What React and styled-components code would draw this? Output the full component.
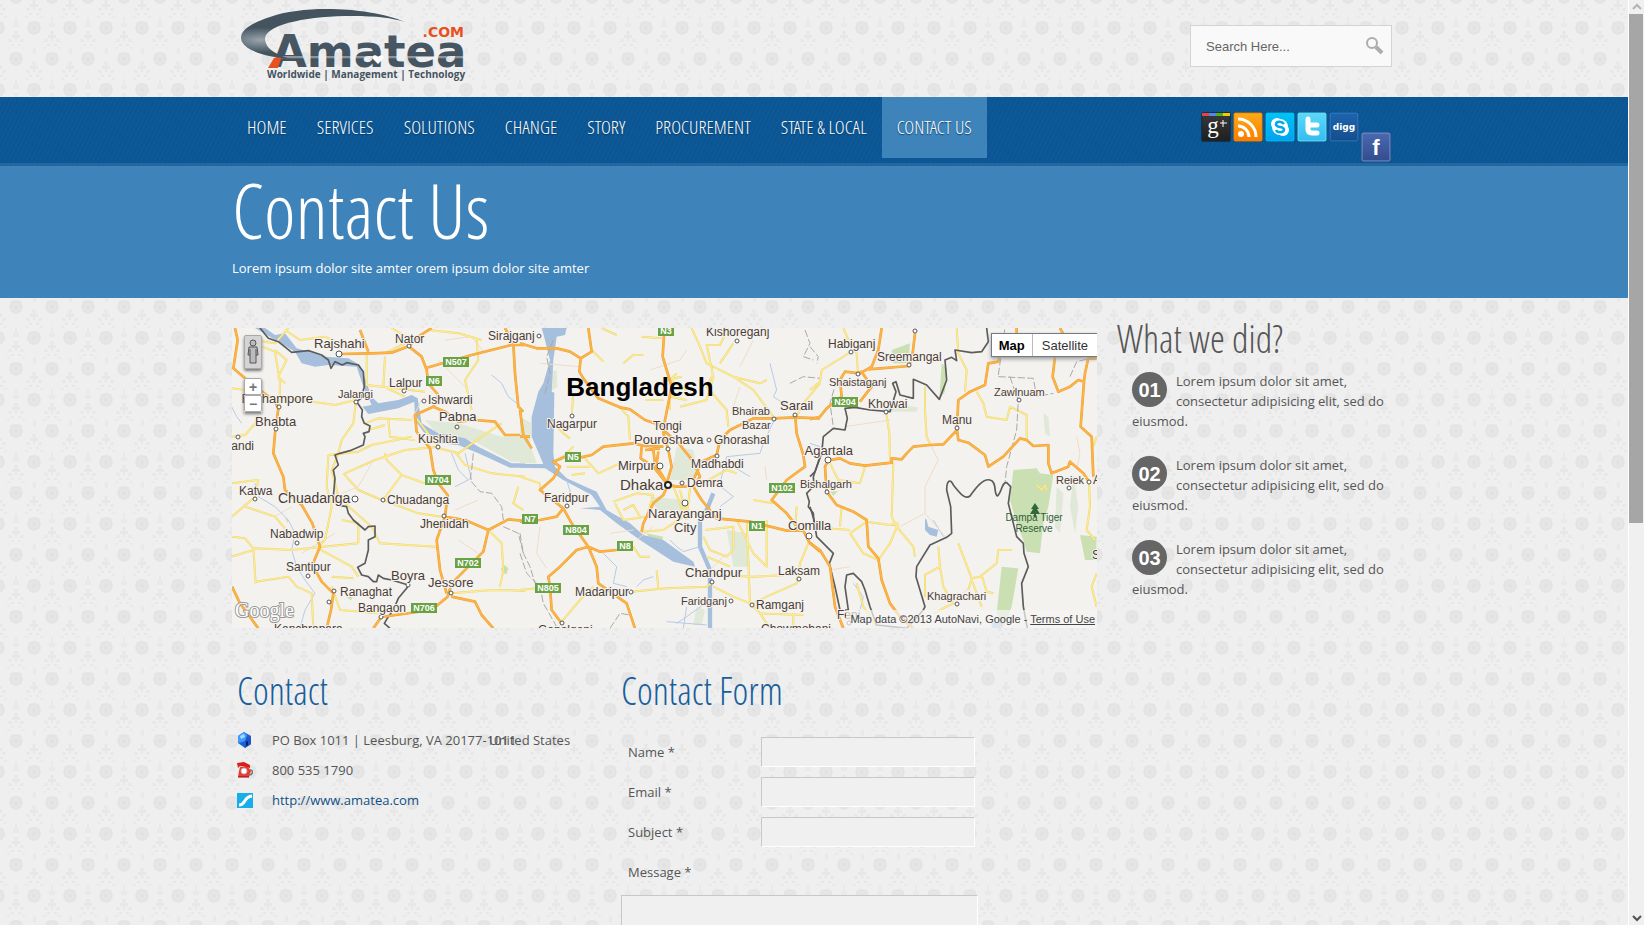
import React, {useState} from 'react';
import styled, {createGlobalStyle} from "styled-components";

const display = `"Open Sans Condensed Light", "Open Sans CondLight", "Roboto Condensed Light", "Roboto Condensed", "Liberation Sans Narrow", "Liberation Sans", sans-serif`;
const arial = `"Liberation Sans", Arial, sans-serif`;

const damask = encodeURIComponent(`<svg xmlns="http://www.w3.org/2000/svg" width="36" height="62"><defs>
<g id="h"><path d="M-5 -6L0 -7L5 -6L7 0L5 5L0 7L-5 5L-7 0Z" fill="#e4e4e4"/><path d="M0 -4L3 -2V2L0 4L-3 2V-2Z" fill="none" stroke="#e8e8e8"/><path d="M0 -1V1" stroke="#dadada"/></g>
<g id="l" fill="#e7e7e7"><path d="M-2 -8H2L1 -4H4V-1H1V2H-1V-1H-4V-4H-1Z"/><path d="M-8 0H-5L-4 3H-7ZM8 0H5L4 3H7ZM-5 5H-2V7H-5ZM5 5H2V7H5Z"/></g></defs>
<rect width="36" height="62" fill="#efefef"/>
<use href="#h" x="16" y="59"/><use href="#h" x="16" y="-3"/><use href="#h" x="34" y="28"/><use href="#h" x="-2" y="28"/>
<use href="#l" x="34" y="8"/><use href="#l" x="-2" y="8"/><use href="#l" x="16" y="39"/>
<path d="M15 17H17V23H19V27H13V23H15ZM33 48H36V54H33ZM0 48V54H-1V48ZM4 16H7V18H4ZM25 16H28V18H25ZM7 47H10V49H7ZM22 47H25V49H22Z" fill="#e9e9e9"/>
</svg>`);

const navItems = ['Home', 'Services', 'Solutions', 'Change', 'Story', 'Procurement', 'State & Local', 'Contact Us'];

const features = ['01', '02', '03'];

// Road sheets: each one is traced at 3x and shifted along the map.
const sheets = [
    {
        x: -7,
        green: ['M600 300L700 310L830 350H900V425H860L750 365L640 345Z'],
        park: ['M828 745L840 735L850 745L845 762L832 760Z', 'M180 595L192 600L188 608Z', 'M365 830L385 825L378 842Z'],
        water: 'M90 24H120L150 45L180 40L215 85L300 110L370 115L405 135L440 230L460 250L520 240L560 225L578 235L590 310L640 340L720 355L760 380L860 430H900V443H855L760 400L700 375L640 370L595 335L570 300L568 245L520 265L430 282L412 260L440 255L415 200L395 140L310 135L270 140L230 130L210 95L160 65Z',
        stream: 'M90 490L100 530L150 560L190 600L210 640L200 690L215 740L240 780L270 820L240 870L225 925M800 165L830 190L850 230L875 250M680 400L700 450L730 480L690 500M20 260L35 290L50 310M720 400L740 480',
        minor: 'M640 120L690 170L720 200M660 60L740 50L780 100M590 240L560 300M150 590L200 560M230 700L330 640M440 430L400 500L350 520M700 660L760 700M690 570L760 540',
        yellow: 'M425 105V195L600 215M180 30L225 60L300 50L380 85M80 60L150 70L190 24M110 80L150 95L165 190L163 260M150 90L185 120L160 170L180 190M21 205L60 210M163 230L330 255L392 240M392 250L385 310L350 360L340 400M310 405L400 395L440 375L560 350M420 310L460 295L560 300M490 300L495 350L570 360M480 315L430 330M340 400L320 450L345 550M570 290L640 380L540 390L450 420L360 460M480 400L485 420L530 465L600 490M530 465L474 540L580 580L650 590M355 460L400 510L470 540M360 550L440 620L465 670L545 675L635 680M310 405L305 500L320 560L300 660L280 680M21 650L60 655L85 685L200 690L280 682L400 670M85 685L92 790M21 710L85 690M92 785L190 770L215 800L260 820L265 925M280 685L380 740L400 770M320 800L345 870L460 880M320 770L385 775M21 490L100 480L90 530L21 590M60 560L150 590L200 650M690 395L720 435L800 460L900 470M880 500L865 550L895 570M680 820L800 810L900 812M795 635L830 670L835 750L825 800M720 180L760 120L755 60M610 30L700 40L770 60M720 180L740 270M21 350L60 345L100 300M640 385L700 400L770 350L830 310M350 600L400 610L400 670M480 110L475 200L540 230M500 24L560 60L480 100',
        orange: 'M30 24L38 60L25 145L60 175L150 245L160 265L150 340L145 400L175 470L180 510L230 555L262 610L285 680L262 735L290 785L325 820L318 870L305 925M21 800L45 850L100 925M342 102L440 100L500 98L551 79L590 110L605 150L610 190L640 225L625 260L570 285L575 335L615 385L625 450L640 490L668 525L660 590L635 660L645 750L665 820M605 143L740 105L860 75H900M625 260L660 275L700 305L750 300L810 305L840 345H895M840 24L865 70L870 160L880 260L895 275M657 590L720 600L790 630L850 598L900 603M790 630L775 695L680 790L668 830L620 870L469 891L445 925M679 830L750 845L770 885L805 925M405 30L430 95M551 79L580 50L620 24',
        border: 'M105 24L130 55L160 65L200 97L250 92L290 105L310 120L318 145L330 125L352 135L365 128L400 135L415 155L418 200L408 235L395 245L412 270L410 290L418 310L435 318L432 335L415 340L420 350L415 375L375 392L345 400L330 405L340 435L325 450L330 475L325 530L335 555L365 560L370 580L385 600L420 630L430 620L450 618L450 650L430 660L430 690L420 730L398 742L410 765L430 770L445 785L455 785L460 765L475 775L500 780L550 795L545 805L520 835L505 870L490 890L478 910L495 925',
        dashed: 'M745 400L740 450L735 480L765 515L800 520L830 560L835 600M835 620L880 640L895 700',
    },
    {
        x: 288,
        green: ['M470 380L520 390L530 440L520 480L450 480Z', 'M390 530L500 540L480 580L410 570Z', 'M620 630L680 640L690 740L640 740Z', 'M0 290L35 310L30 370L50 430H0Z', 'M80 160L110 150L112 200L90 215L75 200Z', 'M530 860L555 870L545 915L520 915Z'],
        park: ['M380 640L430 650L425 665L390 660Z'],
        water: 'M65 24H140L135 45L110 50L100 120L95 215L103 218L100 400L105 440L140 475L230 515L260 570L330 610L370 645L430 660L520 725L525 740L460 725L360 660L290 610L240 570L180 565L240 560L215 525L130 480L75 445L0 443V432H70L35 350V290L55 215L70 190L90 120L75 60Z',
        river: 'M540 600V680L570 750V925M580 520L560 570L540 600',
        stream: 'M540 680L490 695L470 680L450 660M600 490L620 410L720 400L730 370L765 295M750 130L770 210L760 230L820 270M570 840L500 890L470 910M590 490L640 530L600 560M140 480L155 530M250 700L290 740L280 790L320 800M350 800L370 780L400 770M640 440L690 470M500 860L490 925M440 905L560 915',
        minor: 'M180 140L60 130M390 150L480 120L500 90M620 700L560 760M60 620L50 700L80 745M660 200L640 260M400 620L350 660M740 480L735 440M270 640L340 630M700 60L660 140',
        yellow: 'M515 24L540 80L560 130L640 170L720 190L740 180M625 24L600 75H560L580 170L560 240L480 260M600 130L640 70M580 160L560 200L620 270L625 320M640 170L700 210L760 290M215 90L250 125M310 130L340 105H370M365 50L425 55M245 24L290 45M160 220L155 290M300 262L325 290L330 360M375 240H430M470 160L450 180L500 210M440 180L485 170M365 635L430 630L490 590L500 560M280 545L350 520L400 525L380 590L310 600L285 550M310 570L340 555L360 590M120 420L160 380M140 440H210M190 410L235 460L300 430M155 465L195 460M100 310L130 340L150 355M550 650L570 690L620 710L640 690V620L555 630M650 600L700 700L740 740V600M680 600L690 850M580 765L700 770L800 765L900 755M867 665L840 730L830 790L740 830L700 850M335 815L440 805L560 800L580 785M0 810L50 805M125 905L180 840L220 800M410 750L415 805M340 680L360 710H390M690 850L720 880L850 885M750 925L720 880M820 925V880M830 560L825 630M700 540L760 550M0 470L60 490V510M460 500L500 600M480 510L500 590M510 505L500 590M900 190L850 250L830 290M530 500L620 450L650 460M580 800L640 830L690 850M560 710L630 740M450 270V230L500 240',
        orange: 'M0 70L50 85H110L150 95L182 115L215 95L205 24M182 115L178 155L190 175L235 235L300 262L330 268L375 300L440 322M432 45L428 110L440 150L455 200L435 300L430 340L445 390L455 440L440 490M183 412L215 405L250 380L340 370L375 378L430 380M365 380L362 415L400 440L440 490M400 390L405 430L435 480M375 390L420 385M415 395L410 430M444 494L430 525L400 550L370 610L365 635M444 494L470 500H520L545 540L590 595L690 605L800 632H850L867 665L900 695M430 330L480 375L520 425L540 470L520 500M520 480L545 425L590 405L600 360L630 330L700 295H762L826 292L900 295M826 292L830 340L850 405L855 440L800 480L755 540L800 580L840 632M135 410L100 425L120 440L100 475L60 510L130 565L155 610L205 680L230 740L235 790L320 850L345 925M0 605L60 600L110 590L130 565M205 680L240 695L290 690M205 680L170 690L120 740L85 770L90 800L95 870L125 910M0 270L10 345L35 385M0 350H30',
        border: 'M900 410L880 470L882 495L870 510L860 520L868 545L865 560L880 580L882 610',
        dashed: 'M855 30L870 70L850 110L880 120M810 190L850 170L900 175M0 640L10 700L30 740L45 790M100 60L80 110L90 160L75 220M0 700L20 760L60 800L70 850L110 920M270 925L300 880L330 885',
    },
    {
        x: 578,
        green: ['M210 265L270 255L325 262L320 275L240 275Z', 'M740 500L760 520L750 640L735 620ZM790 460L805 560L795 640L780 560ZM700 280L715 290L720 350L705 340Z'],
        park: ['M610 450L680 445L690 460L730 465L715 560L700 610L690 700L650 695L640 660L620 610L600 540Z', 'M575 740L625 745L605 860L580 925L560 880Z', 'M810 645L860 650L858 720L825 720Z', 'M245 90L300 70L295 130L250 130Z', 'M395 130L410 145L405 215L388 238Z', 'M60 515L85 512L70 527Z'],
        water: 'M345 595L350 600L355 620L385 630L380 650L360 645L345 630ZM545 910L580 905L575 925H545Z',
        stream: 'M0 370L30 380M130 790L160 830L150 870M370 600L400 650',
        minor: 'M105 320L160 312L240 300M360 372L385 420L345 500V580L270 620M345 580L410 655M60 750L120 740M800 350L810 400L800 450M450 830L480 800',
        yellow: 'M100 24L115 60L140 100L144 162M123 96L35 150L30 185L0 210M345 200V270L350 350L360 372M228 275L238 340L240 420L250 430L245 590L260 620L310 680L315 710M265 610L240 670L205 720L160 700L120 640L170 605L240 615L265 610M50 625L120 630M95 560L90 620M440 24L445 100L470 150L465 215M500 215L520 250L530 290L590 300L600 260L650 285V360M385 680L390 740L345 765V830M390 740L400 800L430 850L370 880M445 670L485 775L510 770L560 730L565 690H605M485 775L475 810M515 765L530 815L550 820M485 780L515 860M837 485L840 560L830 630L855 660M860 350L850 380M860 760L845 800L860 860M60 430L85 480L150 490L165 440M140 790L160 860L200 920M680 495L695 510L705 495L710 510',
        orange: 'M215 24L205 90L185 140L150 160L105 155L90 180L95 230L50 265L30 290L0 298M315 40L308 100L298 138L175 148M144 162L155 155L185 200L150 245M55 421L90 415L120 430L165 437L245 428L245 415L275 418L290 400L310 380L360 375L400 373L441 330L445 360L475 368L525 405L535 440L580 410L630 355L650 360L670 378L715 375V430L725 460L775 440L780 425L820 460L837 485M441 323L445 240L480 215L525 195L535 130L565 125L570 100M735 110L728 170L745 215L780 200L805 180L822 185L812 320L845 350L850 470M860 115H835L825 160L822 185M55 421L45 440L50 515L80 555L130 575L170 600L175 680L205 715L215 780L240 850L270 890L310 925M0 670L30 690L60 740L75 860L100 925M620 24V45M750 24L770 60',
        border: 'M530 24L535 65L515 95L485 98L435 90L440 122L425 112L405 120L410 180L388 238L350 195L310 178V235L270 225L258 185L248 190L258 215L240 275L180 270L135 262L105 265L112 295L105 330L70 325L40 350L35 400L15 455L0 470M0 560L12 600L20 650L70 700L58 730L75 800L90 870H115L105 800L110 765L130 760L155 785L165 810L180 860L200 915L290 925L340 870L345 860L318 770L320 740L360 675L410 652L425 640L422 560L410 510C410 480 422 475 430 495C450 520 465 540 480 528C500 500 520 475 540 480C562 485 550 520 562 528C575 520 575 485 590 488L602 500L595 550L620 650L640 670L642 700L655 740L635 790L640 860L652 925',
        dashed: 'M600 170L610 200L625 240L620 330L590 440L585 490M565 170L670 175L680 230L730 220M780 170L800 125L860 110M565 165L585 24M0 80L25 110L20 130M80 180L60 250L70 320',
    },
];

// [name, x, baseline, size, anchor]
const places = [
    ['Rajshahi', 82, 20, 13], ['Nator', 163, 15, 12], ['Sirajganj', 256, 12, 12], ['Lalpur', 157, 59, 12],
    ['Jalangi', 106, 70, 11], ['Ishwardi', 196, 76, 12], ['Berhampore', 81, 75, 13, 'end'], ['Bhabta', 23, 98, 13],
    ['Kandi', 22, 122, 12, 'end'], ['Pabna', 207, 93, 13], ['Kushtia', 186, 115, 12], ['Katwa', 7, 167, 12],
    ['Chuadanga', 46, 175, 14], ['Chuadanga', 155, 176, 12], ['Jhenidah', 188, 200, 12], ['Nabadwip', 38, 210, 12],
    ['Santipur', 54, 243, 12], ['Boyra', 159, 252, 13], ['Jessore', 196, 259, 13], ['Ranaghat', 108, 268, 12],
    ['Bangaon', 126, 284, 12], ['Kanchrapara', 42, 305, 12], ['Kishoreganj', 474, 8, 12], ['Nagarpur', 315, 100, 12],
    ['Tongi', 421, 102, 12], ['Pouroshava', 402, 116, 13], ['Bhairab', 500, 87, 11], ['Bazar', 510, 101, 11],
    ['Sarail', 548, 82, 13], ['Ghorashal', 482, 116, 12], ['Mirpur', 386, 142, 13], ['Madhabdi', 459, 140, 12],
    ['Dhaka', 388, 162, 15], ['Demra', 455, 159, 12], ['Faridpur', 312, 174, 12], ['Narayanganj', 416, 190, 13],
    ['City', 442, 204, 13], ['Chandpur', 453, 249, 13], ['Laksam', 546, 247, 12], ['Madaripur', 343, 268, 12],
    ['Faridganj', 449, 277, 11], ['Ramganj', 524, 281, 12], ['Chowmohani', 529, 305, 12], ['Gopalganj', 306, 306, 12],
    ['Habiganj', 596, 20, 12], ['Sreemangal', 645, 33, 12], ['Shaistaganj', 597, 58, 11], ['Khowai', 636, 80, 12],
    ['Zawlnuam', 762, 68, 11], ['Manu', 710, 96, 12], ['Agartala', 621, 127, 13, 'end'], ['Bishalgarh', 620, 160, 11, 'end'],
    ['Comilla', 556, 202, 13], ['Reiek', 824, 156, 11], ['Aizawl', 861, 156, 12], ['Khagrachari', 695, 272, 11],
    ['Feni', 605, 291, 12], ['Serchhip', 860, 231, 12],
];

const dots = [
    [107, 26, 3], [177, 18], [307, 8], [172, 63], [124, 74], [192, 73], [47, 79], [44, 101], [6, 109], [225, 99],
    [206, 119], [23, 171], [123, 171, 3], [151, 172], [212, 188], [65, 215], [76, 248], [176, 257], [219, 265],
    [102, 263], [97, 274], [149, 289], [505, 13], [340, 88], [436, 121], [542, 91], [563, 87], [477, 112],
    [428, 138, 3], [485, 128], [450, 155], [335, 178], [453, 175, 3], [480, 254], [567, 251], [399, 264], [499, 273],
    [520, 277], [330, 295], [619, 24], [677, 37], [683, 3], [626, 46], [654, 84], [787, 72], [725, 100], [596, 132, 3],
    [595, 164], [577, 208, 3], [857, 154], [837, 160], [725, 276], [617, 295],
];

const highways = [
    ['N507', 211, 29], ['N6', 194, 48], ['N704', 193, 147], ['N702', 223, 230], ['N706', 179, 275], ['N3', 426, -2],
    ['N5', 333, 124], ['N102', 537, 155], ['N7', 290, 186], ['N804', 331, 197], ['N8', 385, 213], ['N1', 517, 193],
    ['N805', 303, 255], ['N204', 600, 69],
];

function MapDrawing() {
    return (
        <MapSvg viewBox="0 0 865 300" preserveAspectRatio="xMinYMin slice" aria-label="Map of Bangladesh">
            <rect width="865" height="300" fill="#f4f2ef"/>
            {sheets.map((s) => (
                <g key={s.x} transform={`translate(${s.x} -8) scale(.33333)`} fill="none" strokeLinejoin="round">
                    {s.green.map((d) => <path key={d} d={d} fill="#e0e8d8"/>)}
                    {s.park.map((d) => <path key={d} d={d} fill="#cbe0b2"/>)}
                    <path d={s.water} fill="#a5bfdd"/>
                    {s.river && <path d={s.river} stroke="#a5bfdd" strokeWidth="13"/>}
                    <path d={s.stream} stroke="#b4cbe8" strokeWidth="3"/>
                    <path d={s.minor} stroke="#efdcc8" strokeWidth="3"/>
                    <path d={s.yellow} stroke="#e8cf78" strokeWidth="6"/>
                    <path d={s.yellow} stroke="#fdec8b" strokeWidth="4"/>
                    <path d={s.dashed} stroke="#a9a9a9" strokeWidth="3" strokeDasharray="22 7"/>
                    <path d={s.border} stroke="#5c5c5c" strokeWidth="5"/>
                    <path d={s.orange} stroke="#eda032" strokeWidth="8"/>
                    <path d={s.orange} stroke="#fdb447" strokeWidth="5"/>
                </g>
            ))}
            <path d="M803 175L807 181H805L808 186H804V189H802V186H798L801 181H799Z" fill="#35653f"/>
            {dots.map(([x, y, r = 2]) => (
                <circle key={`${x}-${y}`} cx={x} cy={y} r={r} fill="#fff" stroke="#555"/>
            ))}
            <circle cx="436" cy="157" r="3" fill="#fff" stroke="#222" strokeWidth="2"/>
            {highways.map(([name, x, y]) => (
                <g key={name}>
                    <rect x={x} y={y} width={name.length > 2 ? 26 : 16} height="10" fill="#68a244"/>
                    <Shield x={x + (name.length > 2 ? 13 : 8)} y={y + 8}>{name}</Shield>
                </g>
            ))}
            {places.map(([name, x, y, size, anchor]) => (
                <Place key={`${name}-${x}`} x={x} y={y} fontSize={size} textAnchor={anchor}>{name}</Place>
            ))}
            <Park x="802" y="193">Dampa Tiger</Park>
            <Park x="802" y="204">Reserve</Park>
            <Country x="408" y="68">Bangladesh</Country>
            <Watermark x="3" y="289">Google</Watermark>
        </MapSvg>
    );
}

function Logo() {
    return (
        <svg width="240" height="76" viewBox="0 0 240 76" aria-label="Amatea.com Worldwide Management Technology">
            <defs>
                <linearGradient id="steel" x1="0" y1="0" x2="0" y2="1">
                    <stop offset="0" stopColor="#4b5b68"/>
                    <stop offset=".58" stopColor="#43535f"/>
                    <stop offset=".6" stopColor="#a9b2b9"/>
                    <stop offset=".64" stopColor="#43535f"/>
                    <stop offset="1" stopColor="#4b5b68"/>
                </linearGradient>
                <radialGradient id="shine" cx=".12" cy=".62" r=".25">
                    <stop offset="0" stopColor="#9aa5ad"/>
                    <stop offset="1" stopColor="#44545f"/>
                </radialGradient>
            </defs>
            <LogoWord x="40" y="59">Amatea</LogoWord>
            <path d="M42 50L50 48L46 60H36Z" fill="#e8501f"/>
            <path d="M173 14C140 0 75 -4 38 9C14 17 6 25 10 34C16 44 36 49 58 51C44 46 33 41 33 30C36 15 80 8 120 8C145 8 160 10 173 14Z" fill="url(#shine)"/>
            <path d="M146 56L141 51C139 47 144 46 146 49C149 46 153 47 151 51Z" fill="#fff"/>
            <LogoSuffix x="232" y="29">.COM</LogoSuffix>
            <LogoTag x="35" y="70">Worldwide | Management | Technology</LogoTag>
        </svg>
    );
}

const socials = [
    {
        name: 'Google Plus', top: '#3a3a3a', bottom: '#1f1f1f', edge: '#1a2a38',
        art: () => <>
            <path d="M1 1H8V4H1Z" fill="#e8414c"/><path d="M8 1H15V4H8Z" fill="#5286ec"/>
            <path d="M15 1H22V4H15Z" fill="#57b013"/><path d="M22 1H29V4H22Z" fill="#fcc800"/>
            <GlyphSerif x="12" y="21">g</GlyphSerif>
            <path d="M19 11H26M22 8V15" stroke="#fff"/>
        </>,
    },
    {
        name: 'RSS', top: '#ffab17', bottom: '#fb7d00', edge: '#e98a10',
        art: () => <>
            <circle cx="8" cy="22" r="3" fill="#fff"/>
            <path d="M5 14A11 11 0 0 1 16 25M5 7A18 18 0 0 1 23 25" fill="none" stroke="#fff" strokeWidth="3"/>
        </>,
    },
    {
        name: 'Skype', top: '#00c4f4', bottom: '#00a2ee', edge: '#00bff8',
        art: () => <>
            <circle cx="12" cy="12" r="6" fill="#fff"/><circle cx="18" cy="18" r="6" fill="#fff"/>
            <circle cx="15" cy="15" r="8" fill="#fff"/>
            <path d="M19 12C17 9 11 9 11 12.500C11 16 19 14 19 17.500C19 21 12 21 11 18" fill="none" stroke="#00a9ee" strokeWidth="2.500"/>
        </>,
    },
    {
        name: 'Twitter', top: '#5cd9f8', bottom: '#34bdf0', edge: '#5fe0ff',
        art: () => <path d="M11 7V17Q11 21 15 21H20M11 13H20" fill="none" stroke="#fff" strokeWidth="5" strokeLinecap="round"/>,
    },
    {
        name: 'Digg', top: '#1d65ae', bottom: '#164d8e', edge: '#2f80cc',
        art: () => <GlyphSmall x="15" y="18">digg</GlyphSmall>,
    },
    {
        name: 'Facebook', top: '#4a69b0', bottom: '#334c8d', edge: '#7d95cf', low: true,
        art: () => <GlyphBold x="15" y="23">f</GlyphBold>,
    },
];

function SocialIcon({name, top, bottom, edge, low, art}) {
    const id = name.replace(' ', '');
    return (
        <SocialLink href="#" aria-label={name} $low={low}>
            <svg width="30" height="30" viewBox="0 0 30 30">
                <linearGradient id={id} x1="0" y1="0" x2="0" y2="1">
                    <stop stopColor={top}/><stop offset="1" stopColor={bottom}/>
                </linearGradient>
                <rect width="30" height="30" rx="2" fill="#082f55" opacity=".6"/>
                <rect x="1" y="1" width="28" height="28" rx="1" fill={`url(#${id})`} stroke={edge}/>
                {art()}
            </svg>
        </SocialLink>
    );
}

const HouseIcon = () => (
    <svg width="16" height="16" viewBox="0 0 16 16">
        <path d="M1 4L7 0L14 4L14 12L8 16L1 11Z" fill="#1b62d8"/>
        <path d="M1 4L7 0L10 3L8 9L2 11L1 10Z" fill="#3f9cff"/>
        <path d="M3 4L7 2L8 5L4 7Z" fill="#a5dcff"/>
        <path d="M8 9L11 5L14 7V12L8 16Z" fill="#1f52c4"/>
        <path d="M9 10L11 9V13L9 14Z" fill="#0a1c66"/>
    </svg>
);

const PhoneIcon = () => (
    <svg width="16" height="16" viewBox="0 0 16 16">
        <path d="M0 1L7 0L13 3V6L9 5L3 4L1 6Z" fill="#d81e1e"/>
        <path d="M3 5H11L14 9L12 15H1L2 9Z" fill="#ee3a32"/>
        <circle cx="7" cy="9" r="3" fill="#fff" stroke="#b8b8b8"/>
        <path d="M13 8C17 8 16 13 12 13" fill="none" stroke="#777" strokeWidth="1.500"/>
        <path d="M1 15H12" stroke="#8e0c0c"/>
    </svg>
);

const SiteIcon = () => (
    <svg width="16" height="16" viewBox="0 0 16 16">
        <rect y="1" width="16" height="15" fill="#18afe8"/>
        <path d="M2 13C9 13 6 5 15 4" fill="none" stroke="#fff" strokeWidth="3"/>
    </svg>
);

function App() {
    const [query, setQuery] = useState('Search Here...');
    return (
        <Shell>
            <GlobalStyle/>
            <Page>
                <Header>
                    <a href="#"><Logo/></a>
                    <SearchForm onSubmit={(e) => e.preventDefault()}>
                        <SearchInput aria-label="Search" value={query} onChange={(e) => setQuery(e.target.value)}/>
                        <SearchButton aria-label="Submit search">
                            <svg width="18" height="18" viewBox="0 0 18 18" fill="none" stroke="#adadad">
                                <circle cx="6" cy="6" r="5" strokeWidth="2"/>
                                <path d="M10 10L16 16" strokeWidth="4"/>
                            </svg>
                        </SearchButton>
                    </SearchForm>
                </Header>
                <NavBar>
                    <NavInner>
                        <Nav>
                            {navItems.map((item) => (
                                <NavLink href="#" key={item} $active={item === 'Contact Us'}>{item}</NavLink>
                            ))}
                        </Nav>
                        <Socials>
                            {socials.map((s) => <SocialIcon key={s.name} {...s}/>)}
                        </Socials>
                    </NavInner>
                </NavBar>
                <Banner>
                    <Inner>
                        <Title>Contact Us</Title>
                        <Subtitle>Lorem ipsum dolor site amter orem ipsum dolor site amter</Subtitle>
                    </Inner>
                </Banner>
                <Main>
                    <div>
                        <MapFrame>
                            <MapDrawing/>
                            <Pegman aria-label="Street view">
                                <svg width="12" height="26" viewBox="0 0 12 26" fill="#bbb" stroke="#555">
                                    <circle cx="6" cy="4" r="3"/>
                                    <path d="M2 8H10L11 16H9V24H3V16H1Z"/>
                                    <path d="M3 10V16M9 10V16"/>
                                </svg>
                            </Pegman>
                            <ZoomButtons>
                                <ZoomButton aria-label="Zoom in">+</ZoomButton>
                                <ZoomButton aria-label="Zoom out">−</ZoomButton>
                            </ZoomButtons>
                            <MapTypes>
                                <MapType $active>Map</MapType>
                                <MapType>Satellite</MapType>
                            </MapTypes>
                            <Credit>Map data ©2013 AutoNavi, Google - <a href="#">Terms of Use</a></Credit>
                        </MapFrame>
                        <Lower>
                            <ContactInfo>
                                <Heading $blue>Contact</Heading>
                                <ContactRow><HouseIcon/><Street>PO Box 1011 | Leesburg, VA 20177-1011</Street><span>United States</span></ContactRow>
                                <ContactRow><PhoneIcon/><span>800 535 1790</span></ContactRow>
                                <ContactRow><SiteIcon/><a href="#">http://www.amatea.com</a></ContactRow>
                            </ContactInfo>
                            <form>
                                <Heading $blue>Contact Form</Heading>
                                {['Name', 'Email', 'Subject'].map((field) => (
                                    <Field key={field}>
                                        <Label htmlFor={field}>{field} *</Label>
                                        <Input id={field} type="text"/>
                                    </Field>
                                ))}
                                <Field><Label htmlFor="Message">Message *</Label></Field>
                                <TextArea id="Message"/>
                            </form>
                        </Lower>
                    </div>
                    <aside>
                        <Heading>What we did?</Heading>
                        {features.map((n) => (
                            <Feature key={n}>
                                <Bullet>{n}</Bullet>
                                Lorem ipsum dolor sit amet, consectetur adipisicing elit, sed do eiusmod.
                            </Feature>
                        ))}
                    </aside>
                </Main>
            </Page>
            <ScrollBar>
                <svg width="16" height="14" viewBox="0 0 16 14" fill="none" stroke="#b4b4b4" strokeWidth="2"><path d="M4 9L8 5L12 9"/></svg>
                <Thumb/>
                <svg width="16" height="14" viewBox="0 0 16 14" fill="none" stroke="#505050" strokeWidth="2"><path d="M4 5L8 9L12 5"/></svg>
            </ScrollBar>
        </Shell>
    );
}

const GlobalStyle = createGlobalStyle`
  * {
    box-sizing: border-box;
  }
  body {
    margin: 0;
    color: #555;
    font: 13px/20px "Open Sans", "Noto Sans", sans-serif;
  }
  svg {
    display: block;
  }
  p, h1, h2 {
    margin: 0;
  }
`
const Shell = styled.div`
  display: flex;
  height: 100vh;
  background: url("data:image/svg+xml,${damask}") #efefef;
`
const Page = styled.div`
  flex: 1;
  min-width: 0;
  overflow: hidden;
`
const Inner = styled.div`
  max-width: 1164px;
  margin: 0 auto;
`
const Header = styled(Inner)`
  display: flex;
  justify-content: space-between;
  align-items: flex-start;
  padding: 8px 4px 13px 0;
`
const SearchForm = styled.form`
  display: flex;
  align-items: center;
  width: 202px;
  height: 42px;
  margin-top: 17px;
  border: 1px solid #d3d3d3;
  background: #f9f9f9;
`
const SearchInput = styled.input`
  flex: 1;
  min-width: 0;
  padding: 0 0 0 15px;
  border: none;
  background: none;
  color: #666;
  font: 13px ${arial};
`
const SearchButton = styled.button`
  padding: 0 7px;
  border: none;
  background: none;
`
const NavBar = styled.div`
  border-bottom: 3px solid #22679f;
  background: repeating-linear-gradient(115deg, #0b5592 0 2px, #0d5896 2px 4px);
`
const NavInner = styled(Inner)`
  display: flex;
  justify-content: space-between;
  height: 66px;
`
const Nav = styled.nav`
  display: flex;
`
const NavLink = styled.a`
  height: 61px;
  padding: 0 15px;
  background: ${props => props.$active ? '#3e83ba' : 'none'};
  color: #fff;
  font: 19px/60px ${display};
  text-decoration: none;
  text-transform: uppercase;
  text-shadow: 0 1px 1px #0a3c68;
  white-space: nowrap;
`
const Socials = styled.div`
  display: flex;
  gap: 2px;
  padding: 15px 5px 0 0;
`
const SocialLink = styled.a`
  margin-top: ${props => props.$low ? 20 : 0}px;
`
const Banner = styled.div`
  height: 132px;
  background: #3e83ba;
  color: #fff;
`
const Title = styled.h1`
  padding-top: 4px;
  font: 300 76px/80px ${display};
`
const Subtitle = styled.p`
  padding-top: 8px;
`
const Main = styled(Inner)`
  display: grid;
  grid-template-columns: minmax(0, 865fr) minmax(0, 279fr);
  gap: 20px;
  padding-top: 18px;
`
const MapFrame = styled.div`
  position: relative;
  height: 300px;
  margin-top: 12px;
  overflow: hidden;
`
const MapSvg = styled.svg`
  width: 100%;
  height: 100%;
  font-family: ${arial};
`
const Place = styled.text`
  fill: #4b3d36;
  stroke: #f4f2ef;
  stroke-width: 2px;
  paint-order: stroke;
`
const Shield = styled.text`
  fill: #fff;
  font-size: 9px;
  font-weight: bold;
  text-anchor: middle;
`
const Park = styled.text`
  fill: #2c5f39;
  font-size: 10px;
  text-anchor: middle;
`
const Country = styled.text`
  fill: #000;
  font-size: 26px;
  font-weight: bold;
  text-anchor: middle;
`
const Watermark = styled.text`
  fill: #fff;
  stroke: #999;
  stroke-width: 2px;
  paint-order: stroke;
  font: 20px "Liberation Serif", serif;
`
const Pegman = styled.button`
  position: absolute;
  top: 7px;
  left: 12px;
  display: grid;
  place-items: center;
  width: 18px;
  height: 34px;
  padding: 0;
  border: 1px solid #aaa;
  border-radius: 2px;
  background: #d4d4d4;
  box-shadow: 0 2px 3px #777;
`
const ZoomButtons = styled.div`
  position: absolute;
  top: 50px;
  left: 12px;
  box-shadow: 0 2px 3px #777;
`
const ZoomButton = styled.button`
  display: block;
  width: 18px;
  height: 17px;
  padding: 0;
  border: 1px solid #aaa;
  border-radius: 2px;
  background: #fff;
  color: #777;
  font: bold 14px/14px ${arial};
`
const MapTypes = styled.div`
  position: absolute;
  top: 5px;
  right: 0;
  display: flex;
  border: 1px solid #717b87;
  border-right: none;
  background: #fff;
  box-shadow: 0 2px 4px #999;
`
const MapType = styled.button`
  height: 22px;
  padding: 0 ${props => props.$active ? 7 : 9}px;
  border: none;
  border-left: ${props => props.$active ? 0 : 1}px solid #bbb;
  background: none;
  color: ${props => props.$active ? '#000' : '#333'};
  font: ${props => props.$active ? 'bold' : 'normal'} 13px ${arial};
`
const Credit = styled.div`
  position: absolute;
  right: 0;
  bottom: 0;
  padding: 0 2px 0 4px;
  background: rgba(245, 245, 245, .7);
  color: #444;
  font: 11px/18px ${arial};
  a {
    color: #444;
  }
`
const Lower = styled.div`
  display: grid;
  grid-template-columns: 384px minmax(0, 357px);
  padding: 40px 0 0 5px;
`
const Heading = styled.h2`
  color: ${props => props.$blue ? '#195f9e' : '#555'};
  font: 300 38px/44px ${display};
`
const ContactInfo = styled.div`
  ${Heading} {
    margin-bottom: 13px;
  }
`
const ContactRow = styled.div`
  display: flex;
  align-items: center;
  gap: 19px;
  height: 30px;
  white-space: nowrap;
  a {
    color: #124f85;
    text-decoration: none;
  }
`
const Street = styled.span`
  width: 217px;
  margin-right: -19px;
`
const Field = styled.div`
  display: flex;
  align-items: center;
  height: 40px;
  &:first-of-type {
    margin-top: 20px;
  }
`
const Label = styled.label`
  width: 140px;
  padding-left: 7px;
`
const Input = styled.input`
  width: 214px;
  height: 30px;
  border: 1px solid;
  border-color: #c8c8c8 #fff #fff #c8c8c8;
  background: #f0f0f0;
`
const TextArea = styled.textarea`
  display: block;
  width: 100%;
  height: 150px;
  margin-top: 3px;
  border: 1px solid;
  border-color: #c8c8c8 #fff #fff #c8c8c8;
  background: #f0f0f0;
  resize: none;
`
const Feature = styled.p`
  margin-bottom: 24px;
  padding: 0 10px 0 15px;
  ${Heading} + & {
    margin-top: 11px;
  }
`
const Bullet = styled.span`
  float: left;
  width: 35px;
  height: 35px;
  margin: 1px 9px 0 0;
  border-radius: 50%;
  background: #666;
  color: #fff;
  font: bold 20px/36px ${arial};
  text-align: center;
`
const ScrollBar = styled.div`
  display: flex;
  flex-direction: column;
  justify-content: space-between;
  width: 16px;
  border-left: 1px solid #fff;
  background: #f0f0f0;
`
const Thumb = styled.div`
  flex: 0 0 55%;
  margin: 0 1px auto 0;
  background: #a6a6a6;
`
const LogoWord = styled.text`
  fill: url(#steel);
  font: bold 45px "DejaVu Sans", sans-serif;
`
const LogoSuffix = styled.text`
  fill: #e8501f;
  font: bold 14px "DejaVu Sans", sans-serif;
  text-anchor: end;
`
const LogoTag = styled.text`
  fill: #43535f;
  font: bold 10px "Open Sans", sans-serif;
`
const GlyphSerif = styled.text`
  fill: #fff;
  font: 23px "Liberation Serif", serif;
  text-anchor: middle;
`
const GlyphSmall = styled.text`
  fill: #fff;
  font: bold 9px "DejaVu Sans", sans-serif;
  text-anchor: middle;
`
const GlyphBold = styled.text`
  fill: #fff;
  font: bold 22px ${arial};
  text-anchor: middle;
`
export default App;
